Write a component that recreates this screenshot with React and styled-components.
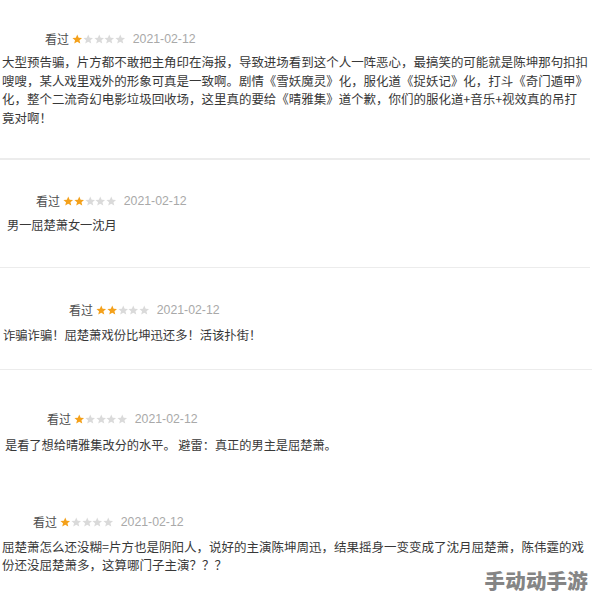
import React from "react";
import styled, { createGlobalStyle } from "styled-components";

const Global = createGlobalStyle`
  html, body { margin: 0; padding: 0; background: #ffffff; }
  body { font-family: "Liberation Sans", "Noto Sans CJK SC", sans-serif; }
`;

const Page = styled.div`
  position: relative;
  width: 594px;
  height: 603px;
  overflow: hidden;
  background: #fff;
  display: flex;
  flex-direction: column;
`;

const Review = styled.section`
  box-sizing: border-box;
  flex: none;
  height: ${(p) => p.$h}px;
  padding-top: ${(p) => p.$top}px;
  width: ${(p) => p.$lineW}px;
  border-bottom: ${(p) => (p.$divider ? `${p.$divider}px solid #ececec` : "none")};
  display: flex;
  flex-direction: column;
  gap: ${(p) => p.$gap}px;
`;

const Header = styled.div`
  display: flex;
  align-items: center;
  height: 16px;
  padding-left: ${(p) => p.$indent}px;
`;

const Watched = styled.span`
  font-family: "Noto Sans CJK SC", sans-serif;
  font-size: 12px;
  color: #4d4d4d;
  margin-right: 3px;
  line-height: 16px;
`;

const Stars = styled.span`
  display: inline-flex;
  align-items: center;
  gap: 0.3px;
  margin-right: 7px;
`;

const DateText = styled.span`
  font-family: "Liberation Sans", sans-serif;
  font-size: 12.3px;
  color: #a9a9a9;
  line-height: 16px;
`;

const Body = styled.div`
  padding-left: ${(p) => p.$indent}px;
  font-family: "Noto Sans CJK SC", sans-serif;
  font-size: ${(p) => p.$size}px;
  line-height: ${(p) => p.$lh}px;
  color: #383838;
`;

const Line = styled.div`
  white-space: nowrap;
`;

const Watermark = styled.div`
  position: absolute;
  right: 6px;
  bottom: 11px;
  font-family: "Noto Sans CJK SC", sans-serif;
  font-weight: 900;
  font-size: 20.5px;
  line-height: 24px;
  color: #858585;
  letter-spacing: 0.2px;
`;

const Star = ({ on }) => (
  <svg width="10.5" height="10.5" viewBox="0 0 24 24">
    <path
      d="M12 1.2l3.2 7.2 7.8.7-5.9 5.1 1.8 7.7L12 17.8l-6.9 4.1 1.8-7.7-5.9-5.1 7.8-.7z"
      fill={on ? "#f4a11b" : "#dadada"}
    />
  </svg>
);

const reviews = [
  {
    h: 160, top: 31, gap: 6, divider: 2, lineW: 590,
    hIndent: 45, bIndent: 2, size: 12.47, lh: 18.7, stars: 1,
    lines: [
      "大型预告骗，片方都不敢把主角印在海报，导致进场看到这个人一阵恶心，最搞笑的可能就是陈坤那句扣扣",
      "嗖嗖，某人戏里戏外的形象可真是一致啊。剧情《雪妖魔灵》化，服化道《捉妖记》化，打斗《奇门遁甲》",
      "化，整个二流奇幻电影垃圾回收场，这里真的要给《晴雅集》道个歉，你们的服化道+音乐+视效真的吊打",
      "竟对啊！",
    ],
  },
  {
    h: 108, top: 33, gap: 7, divider: 1, lineW: 590,
    hIndent: 36, bIndent: 7, size: 12.2, lh: 18, stars: 2,
    lines: ["男一屈楚萧女一沈月"],
  },
  {
    h: 102, top: 34, gap: 8, divider: 1, lineW: 592,
    hIndent: 69, bIndent: 3, size: 12.3, lh: 18, stars: 2,
    lines: ["诈骗诈骗！屈楚萧戏份比坤迅还多！活该扑街！"],
  },
  {
    h: 110, top: 41, gap: 9, divider: 0, lineW: 594,
    hIndent: 47, bIndent: 5, size: 12.2, lh: 18, stars: 1,
    lines: ["是看了想给晴雅集改分的水平。 避雷：真正的男主是屈楚萧。"],
  },
  {
    h: 123, top: 34, gap: 8, divider: 0, lineW: 594,
    hIndent: 33, bIndent: 2, size: 12.5, lh: 17.5, stars: 1,
    lines: [
      "屈楚萧怎么还没糊=片方也是阴阳人，说好的主演陈坤周迅，结果摇身一变变成了沈月屈楚萧，陈伟霆的戏",
      "份还没屈楚萧多，这算哪门子主演？？？",
    ],
  },
];

export default function App() {
  return (
    <>
      <Global />
      <Page>
        {reviews.map((r, i) => (
          <Review key={i} $h={r.h} $top={r.top} $gap={r.gap} $divider={r.divider} $lineW={r.lineW}>
            <Header $indent={r.hIndent}>
              <Watched>看过</Watched>
              <Stars>
                {[0, 1, 2, 3, 4].map((s) => (
                  <Star key={s} on={s < r.stars} />
                ))}
              </Stars>
              <DateText>2021-02-12</DateText>
            </Header>
            <Body $indent={r.bIndent} $size={r.size} $lh={r.lh}>
              {r.lines.map((l, j) => (
                <Line key={j}>{l}</Line>
              ))}
            </Body>
          </Review>
        ))}
        <Watermark>手动动手游</Watermark>
      </Page>
    </>
  );
}
